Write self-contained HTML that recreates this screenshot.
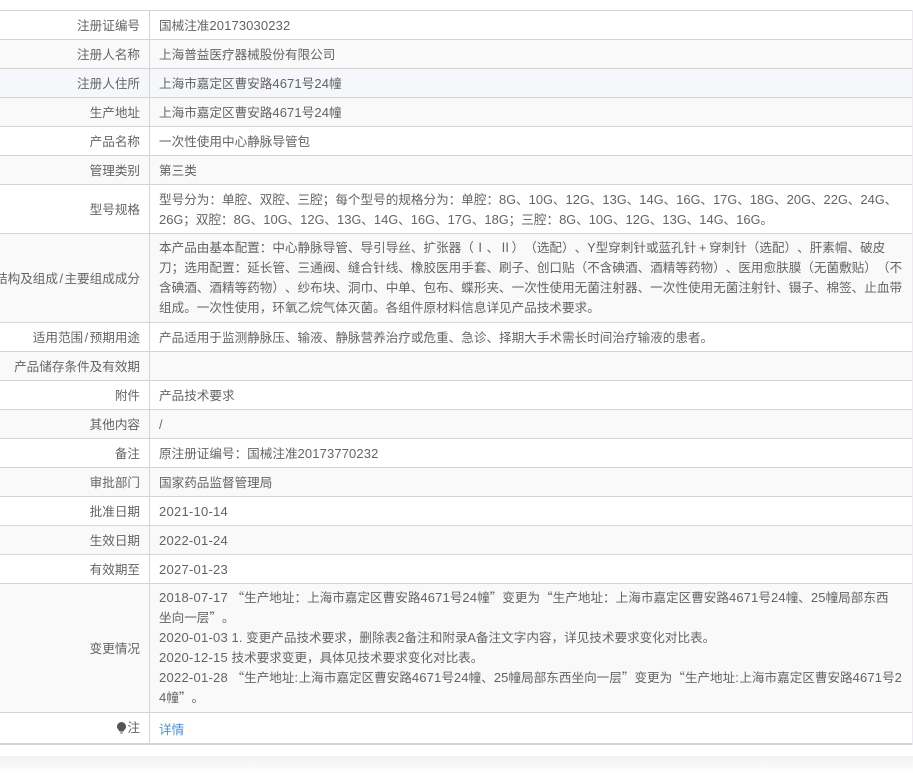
<!DOCTYPE html>
<html lang="zh-CN">
<head>
<meta charset="utf-8">
<style>
html,body{margin:0;padding:0;background:#fff;}
body{width:913px;height:774px;position:relative;overflow:hidden;font-family:"Liberation Sans","Noto Sans CJK SC",sans-serif;font-size:12.6px;color:#646464;line-height:20px;text-spacing-trim:space-all;font-kerning:none;}
u{text-decoration:none;font-size:13px;letter-spacing:.12px;line-height:0;}
.z u{letter-spacing:0;}
u.d{letter-spacing:.25px;}
u.c{letter-spacing:.13px;}
u.k{letter-spacing:.6px;font-size:12.6px;}
em{font-style:normal;font-family:"Noto Sans CJK SC",sans-serif;line-height:0;}
.p{display:inline-block;width:12.6px;text-align:center;line-height:0;}
.l{padding:0 1.5px;}
#t{position:absolute;left:0;top:10px;width:912px;border-top:1px solid #d4d4d4;}
.r{position:relative;border-bottom:1px solid #d4d4d4;box-sizing:border-box;padding:5px 0 3px 159px;white-space:nowrap;height:29px;background:#fff;}
.r.s{background:#f9f9f9;}
.r.h{background:#f5f7fb;}
.r b{font-weight:normal;position:absolute;right:772px;top:50%;margin-top:-9px;}
.r:after{content:"";position:absolute;left:149px;top:0;bottom:0;width:1px;background:#d4d4d4;}
#side{position:absolute;left:912px;top:10px;width:1px;height:735px;background:#ece9f5;}
#sh{position:absolute;left:0;top:756px;width:913px;height:18px;background:linear-gradient(#f1f1f1,#fff);}
a{color:#4a90d9;text-decoration:none;}
svg{vertical-align:-2px;margin-right:1px;}
</style>
</head>
<body>
<div id="t">
<div class="r"><b>注册证编号</b>国械注准<u class="c">20173030232</u></div>
<div class="r s"><b>注册人名称</b>上海普益医疗器械股份有限公司</div>
<div class="r h"><b>注册人住所</b>上海市嘉定区曹安路<u>4671</u>号<u>24</u>幢</div>
<div class="r s"><b>生产地址</b>上海市嘉定区曹安路<u>4671</u>号<u>24</u>幢</div>
<div class="r"><b>产品名称</b>一次性使用中心静脉导管包</div>
<div class="r s"><b>管理类别</b>第三类</div>
<div class="r z" style="height:49px"><b>型号规格</b>型号分为：单腔、双腔、三腔；每个型号的规格分为：单腔：<u>8</u>G、<u>10</u>G、<u>12</u>G、<u>13</u>G、<u>14</u>G、<u>16</u>G、<u>17</u>G、<u>18</u>G、<u>20</u>G、<u>22</u>G、<u>24</u>G、<br><u>26</u>G；双腔：<u>8</u>G、<u>10</u>G、<u>12</u>G、<u>13</u>G、<u>14</u>G、<u>16</u>G、<u>17</u>G、<u>18</u>G；三腔：<u>8</u>G、<u>10</u>G、<u>12</u>G、<u>13</u>G、<u>14</u>G、<u>16</u>G。</div>
<div class="r s" style="height:89px;padding-top:4px"><b>结构及组成<span class="l">/</span>主要组成成分</b>本产品由基本配置：中心静脉导管、导引导丝、扩张器（<em>Ⅰ</em>、<em>Ⅱ</em>）（选配）、Y型穿刺针或蓝孔针<span class="p">+</span>穿刺针（选配）、肝素帽、破皮<br>刀；选用配置：延长管、三通阀、缝合针线、橡胶医用手套、刷子、创口贴（不含碘酒、酒精等药物）、医用愈肤膜（无菌敷贴）（不<br>含碘酒、酒精等药物）、纱布块、洞巾、中单、包布、蝶形夹、一次性使用无菌注射器、一次性使用无菌注射针、镊子、棉签、止血带<br>组成。一次性使用，环氧乙烷气体灭菌。各组件原材料信息详见产品技术要求。</div>
<div class="r"><b>适用范围<span class="l">/</span>预期用途</b>产品适用于监测静脉压、输液、静脉营养治疗或危重、急诊、择期大手术需长时间治疗输液的患者。</div>
<div class="r s"><b>产品储存条件及有效期</b></div>
<div class="r"><b>附件</b>产品技术要求</div>
<div class="r s"><b>其他内容</b>/</div>
<div class="r"><b>备注</b>原注册证编号：国械注准<u class="c">20173770232</u></div>
<div class="r s"><b>审批部门</b>国家药品监督管理局</div>
<div class="r"><b>批准日期</b><u class="d">2021-10-14</u></div>
<div class="r s"><b>生效日期</b><u class="d">2022-01-24</u></div>
<div class="r"><b>有效期至</b><u class="d">2027-01-23</u></div>
<div class="r s" style="height:129px;padding-top:4px"><b>变更情况</b><u class="d">2018-07-17</u> <em>“</em>生产地址：上海市嘉定区曹安路<u>4671</u>号<u>24</u>幢<em>”</em>变更为<em>“</em>生产地址：上海市嘉定区曹安路<u>4671</u>号<u>24</u>幢、<u>25</u>幢局部东西<br>坐向一层<em>”</em>。<br><u class="d">2020-01-03</u> <u>1.</u> 变更产品技术要求，删除表<u>2</u>备注和附录A备注文字内容，详见技术要求变化对比表。<br><u class="d">2020-12-15</u> 技术要求变更，具体见技术要求变化对比表。<br><u class="d">2022-01-28</u> <em>“</em>生产地址<u class="k">:</u>上海市嘉定区曹安路<u>4671</u>号<u>24</u>幢、<u>25</u>幢局部东西坐向一层<em>”</em>变更为<em>“</em>生产地址<u class="k">:</u>上海市嘉定区曹安路<u>4671</u>号<u>2</u><br><u>4</u>幢<em>”</em>。</div>
<div class="r" style="height:32px;border-bottom:2px solid #d4d4d4;padding-top:7px"><b style="margin-top:-10px"><svg width="9" height="12" viewBox="0 0 9 12"><path d="M4.5 0A4.5 4.5 0 0 1 9 4.5C9 7 7 8 6.4 9.5H2.6C2 8 0 7 0 4.5A4.5 4.5 0 0 1 4.5 0Z" fill="#555"/><path d="M3 10H6V11.8H3Z" fill="#aaa"/></svg>注</b><a>详情</a></div>
</div>
<div id="side"></div>
<div id="sh"></div>
</body>
</html>
